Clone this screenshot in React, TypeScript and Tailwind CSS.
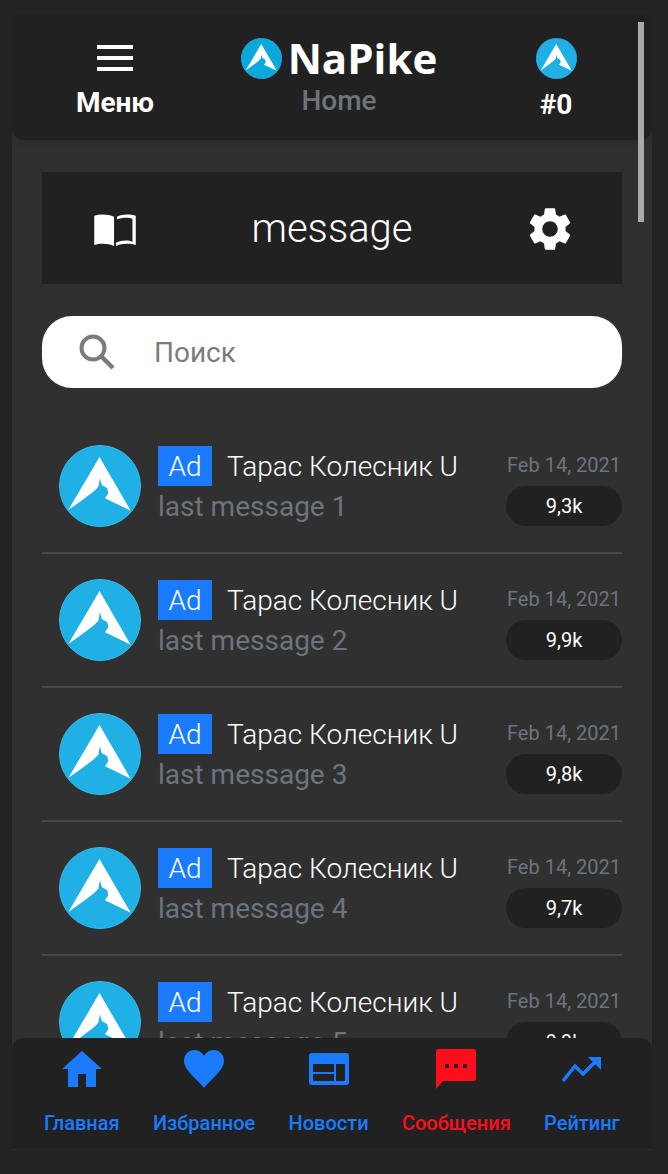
import React from 'react';

const BLUE = '#1a7bff';

const Peak: React.FC<{ className?: string; fill?: string }> = ({ className, fill = '#1fb1e6' }) => (
  <svg viewBox="0 0 82 82" className={className}>
    <circle cx="41" cy="41" r="40.5" fill={fill} stroke="#3cb9e6" strokeWidth="1" />
    <path
      d="M40.5 12 L9.3 65 L21 56.7 L34.3 46.7 L39.3 41.7 L41 33.3 L42.7 40 L48.3 43.3 L49.3 48.3 L46 53.3 L71.7 65.7 Z"
      fill="#fff"
    />
  </svg>
);

const messages = [
  { id: 1, count: '9,3k' },
  { id: 2, count: '9,9k' },
  { id: 3, count: '9,8k' },
  { id: 4, count: '9,7k' },
  { id: 5, count: '9,9k' },
];

const MessageRow: React.FC<{ id: number; count: string }> = ({ id, count }) => (
  <div className="flex h-[134px] shrink-0 items-start border-b-2 border-[#484848] pt-[25px]">
    <Peak className="ml-[17px] h-[82px] w-[82px] shrink-0" />
    <div className="ml-[17px] mt-px min-w-0 flex-1">
      <div className="flex h-10 items-center">
        <span className="flex h-10 w-[54px] items-center justify-center bg-[#1a7bff] pt-[2px] text-[28px] font-light text-white">Ad</span>
        <span className="ml-[15px] mt-[2px] whitespace-nowrap text-[28px] font-light text-white">Тарас Колесник U</span>
      </div>
      <div className="text-[28px] leading-[41px] text-[#6c757d]">last message {id}</div>
    </div>
    <div className="mt-px flex w-[116px] shrink-0 flex-col items-end">
      <div className="h-10 pt-[6px] pr-px text-[20px] leading-[26px] text-[#6c757d]">Feb 14, 2021</div>
      <div className="flex h-10 w-[116px] items-center justify-center rounded-full bg-[#212121] text-[20px] text-white">{count}</div>
    </div>
  </div>
);

const NavItem: React.FC<{ label: string; color: string; children: React.ReactNode }> = ({ label, color, children }) => (
  <div className="flex flex-col items-center">
    <div className="flex h-[56px] items-center justify-center">{children}</div>
    <div className="mt-[11px] whitespace-nowrap text-[20px] font-medium" style={{ color }}>{label}</div>
  </div>
);

export default function App() {
  return (
    <div className="relative h-[1174px] w-[668px] overflow-hidden bg-[#232325] font-['Roboto',sans-serif]">
      <div className="ml-3 mt-[14px] h-[1136px] w-[640px] overflow-hidden bg-[#303030]">
        {/* Header */}
        <div className="grid h-[126px] grid-cols-[206px_242px_192px] rounded-b-xl bg-[#212121] shadow-md">
          <div className="flex flex-col items-center pt-[31px]">
            <div className="flex w-9 flex-col gap-[7px]">
              <span className="h-1 bg-white" />
              <span className="h-1 bg-white" />
              <span className="h-1 bg-white" />
            </div>
            <div className="mt-[16px] text-[28px] font-bold leading-8 text-white">Меню</div>
          </div>
          <div className="flex flex-col items-center pt-[20px]">
            <div className="flex h-[48px] items-center">
              <Peak className="h-[41px] w-[41px]" fill="#0ba8dc" />
              <span className="ml-[6px] font-['Open_Sans',sans-serif] text-[42px] font-bold leading-[48px] text-white">NaPike</span>
            </div>
            <div className="mt-[3px] text-[28px] font-medium leading-8 text-[#6c757d]">Home</div>
          </div>
          <div className="flex flex-col items-center pt-6">
            <Peak className="h-[41px] w-[41px]" />
            <div className="mt-[10px] text-[28px] font-bold leading-8 text-white">#0</div>
          </div>
        </div>

        <div className="px-[30px] pt-8">
          {/* Title bar */}
          <div className="flex h-[112px] items-center justify-between bg-[#212121] pl-[50px] pr-[46px]">
            <svg viewBox="0 0 46 36" className="mt-[3px] h-[34px] w-[46px]">
              <path
                d="M22 4 C16 1 7 1 1 3 V34 C7 32 16 32 22 35 Z M25 4 C30 1 39 1 45 3 V34 C39 32 30 32 24 35 V31.5 C30 28.5 37 28.5 41.5 30.5 V6 C37 4.5 30 4.5 25 7 Z"
                fill="#fff"
              />
            </svg>
            <span className="ml-[2px] mt-[2px] text-[40px] font-light text-white">message</span>
            <svg viewBox="0 0 24 24" className="mt-[2px] h-[52px] w-[52px]" fill="#fff">
              <path d="M19.14 12.94c.04-.3.06-.61.06-.94s-.02-.64-.07-.94l2.03-1.58a.5.5 0 0 0 .12-.61l-1.92-3.32a.5.5 0 0 0-.59-.22l-2.39.96a7 7 0 0 0-1.62-.94l-.36-2.54a.48.48 0 0 0-.48-.41h-3.84a.48.48 0 0 0-.47.41l-.36 2.54c-.59.24-1.13.57-1.62.94l-2.39-.96a.49.49 0 0 0-.59.22L2.74 8.87a.48.48 0 0 0 .12.61l2.03 1.58c-.05.3-.09.63-.09.94s.02.64.07.94l-2.03 1.58a.5.5 0 0 0-.12.61l1.92 3.32c.12.22.37.29.59.22l2.39-.96c.5.38 1.03.7 1.62.94l.36 2.54c.05.24.24.41.48.41h3.84c.24 0 .44-.17.47-.41l.36-2.54c.59-.24 1.13-.56 1.62-.94l2.39.96c.22.08.47 0 .59-.22l1.92-3.32a.48.48 0 0 0-.12-.61l-2.01-1.58zM12 15.6A3.6 3.6 0 1 1 12 8.4a3.6 3.6 0 0 1 0 7.2z" />
            </svg>
          </div>

          {/* Search */}
          <div className="mt-8 flex h-[72px] items-center rounded-[30px] bg-white pl-[36px]">
            <svg viewBox="0 0 38 38" className="h-[38px] w-[38px]" fill="none" stroke="#7b7b7b" strokeWidth="4">
              <circle cx="15" cy="15" r="11.5" />
              <path d="M23.5 23.5 L35 35" strokeWidth="4.5" />
            </svg>
            <span className="ml-[38px] mt-[2px] text-[28px] text-[#7b7b7b]">Поиск</span>
          </div>

          {/* Messages */}
          <div className="mt-8 flex flex-col">
            {messages.map(m => (
              <MessageRow key={m.id} id={m.id} count={m.count} />
            ))}
          </div>
        </div>
      </div>

      {/* Scrollbar */}
      <div className="absolute left-[638px] top-[22px] h-[200px] w-[6px] bg-[#aaaaaa]" />

      {/* Bottom nav */}
      <div className="absolute left-3 top-[1038px] flex h-[112px] w-[640px] justify-between rounded-t-xl border-b border-[#2a2a2c] bg-[#212121] px-[32px] pt-[3px]">
        <NavItem label="Главная" color={BLUE}>
          <svg viewBox="0 0 40 36" className="h-[36px] w-10" fill={BLUE}>
            <path d="M20 0 L40 18 H34 V36 H24 V23 H16 V36 H6 V18 H0 Z" />
          </svg>
        </NavItem>
        <NavItem label="Избранное" color={BLUE}>
          <svg viewBox="0 0 40 38" className="h-[38px] w-10" fill={BLUE}>
            <path d="M20 38 C12 28 0 20 0 11 C0 4 5 0 10 0 C14 0 18 2 20 6 C22 2 26 0 30 0 C35 0 40 4 40 11 C40 20 28 28 20 38 Z" />
          </svg>
        </NavItem>
        <NavItem label="Новости" color={BLUE}>
          <svg viewBox="0 0 40 32" className="h-8 w-10">
            <rect width="40" height="32" rx="3" fill={BLUE} />
            <path d="M4 11 H25 V19 H4 Z M4 21 H25 V28 H4 Z M27 11 H36 V28 H27 Z" fill="#212121" />
          </svg>
        </NavItem>
        <NavItem label="Сообщения" color="#ff0d1d">
          <svg viewBox="0 0 40 40" className="h-10 w-10">
            <path d="M2 0 H38 A2 2 0 0 1 40 2 V30 A2 2 0 0 1 38 32 H7 L0 40 V2 A2 2 0 0 1 2 0 Z" fill="#ff0d1d" />
            <path d="M9 15 H13 V19 H9 Z M18 15 H22 V19 H18 Z M27 15 H31 V19 H27 Z" fill="#212121" />
          </svg>
        </NavItem>
        <NavItem label="Рейтинг" color={BLUE}>
          <svg viewBox="0 0 40 26" className="h-[26px] w-10" fill="none">
            <path d="M1 25 L13 10 L21 18 L35 4" stroke={BLUE} strokeWidth="3.5" />
            <path d="M26 1 H39 V14 Z" fill={BLUE} />
          </svg>
        </NavItem>
      </div>
    </div>
  );
}
